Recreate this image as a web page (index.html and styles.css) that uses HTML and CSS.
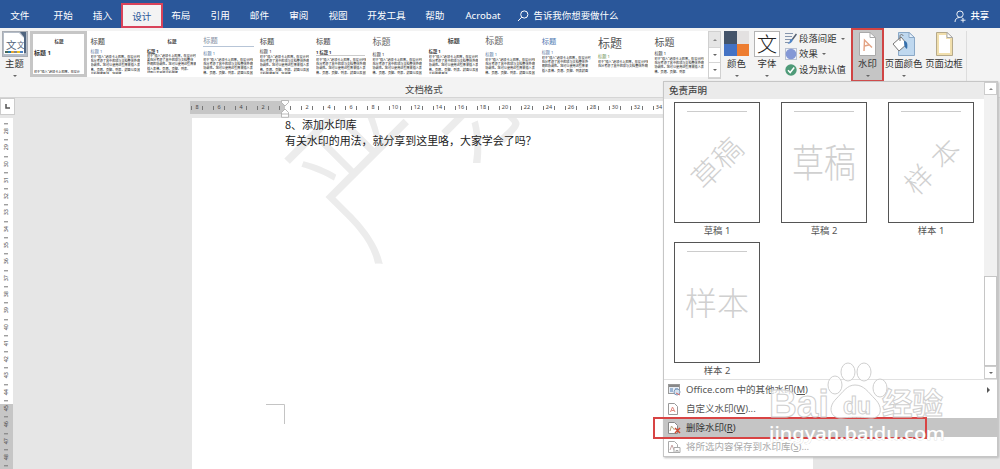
FILE: index.html
```html
<!DOCTYPE html>
<html lang="zh-CN">
<head>
<meta charset="utf-8">
<title>Word</title>
<link rel="stylesheet" href="styles.css">
</head>
<body>
<div class="app">
<header class="tabs">
<span class="tab file">文件</span><span class="tab">开始</span><span class="tab">插入</span><span class="tab active">设计</span><span class="tab">布局</span><span class="tab">引用</span><span class="tab">邮件</span><span class="tab">审阅</span><span class="tab">视图</span><span class="tab">开发工具</span><span class="tab">帮助</span><span class="tab acro">Acrobat</span>
<span class="search"><svg width="12" height="12" viewBox="0 0 12 12" fill="none" stroke="#fff" stroke-width="1"><circle cx="7.3" cy="4.5" r="3.6"/><path d="M4.7 7.2 1 11"/></svg>告诉我你想要做什么</span>
<span class="share"><svg width="12" height="13" viewBox="0 0 12 13" fill="none" stroke="#fff" stroke-width=".9"><circle cx="6" cy="4.2" r="3.2"/><path d="M1 12c0-3 2-4.5 4.5-4.5M7.5 7.3l1 .9M9 8v4.5M6.7 10.2h4.8"/></svg>共享</span>
</header>
<section class="ribbon">
<div class="theme">
<svg width="26" height="26" viewBox="0 0 26 26"><rect x=".5" y=".5" width="25" height="25" fill="#b5bdc8" stroke="#a8acb3"/><path d="M2 2h15l5 5v16H2z" fill="#fff"/><path d="M18 1h6v21h-2V6z" fill="#50657f"/><text x="4" y="18" font-size="10.500" fill="#53657c">文</text><text x="15" y="17" font-size="7.500" fill="#53657c">文</text><path d="M3 20h3v2H3z" fill="#465"/><path d="M6 20h3v2H6z" fill="#27a"/><path d="M9 20h3v2H9z" fill="#e8a72d"/><path d="M12 20h3v2h-3z" fill="#888"/><path d="M15 20h3v2h-3z" fill="#efc123"/><path d="M18 20h3v2h-3z" fill="#4b83c4"/></svg>
<span>主题</span><i class="arrow"></i>
</div>
<div class="gallery">
<div class="style chosen"><b class="t center">标题</b><b class="h">标题 1</b><p>对于"插入"选项卡上的库，在设计</p></div>
<div class="style"><span class="t">标题</span><span class="h blue">标题 1</span><p>对于"插入"选项卡上的库，在设计时都<br>充分考虑了其中的项与文档整体外观的<br>协调性。您可以使用这些库来插入表<br>格、页眉、页脚、列表、封面以及其他<br>文档构建基块。您创建</p></div>
<div class="style s3"><b class="t center">标题</b><b class="h">标题 1</b><p>对于"插入"选项卡上的库，在设计时都<br>要充分考虑了其中的项与文档整体<br>外观的协调性。您可以使用这些库来<br>插入表格、页眉、页脚、列表、<br>封面以及其他文档构建</p></div>
<div class="style s4"><span class="t">标题</span><span class="h blue">标题 1</span><p>对于"插入"选项卡上的库，在设计时都<br>充分考虑了其中的项与文档整体外观的<br>协调性。您可以使用这些库来插入表<br>格、页眉、页脚、列表、封面以及其他</p></div>
<div class="style"><span class="t">标题</span><span class="h">标题 1</span><p>对于"插入"选项卡上的库，在设计时都<br>充分考虑了其中的项与文档整体外观的<br>协调性。您可以使用这些库来插入表<br>格、页眉、页脚、列表、封面以及其他<br>文档构建基块。您创建</p></div>
<div class="style s6"><span class="t">标题</span><b class="h">1 标题 1</b><p>对于"插入"选项卡上的库，在设计时都<br>充分考虑了其中的项与文档整体外观的<br>协调性。您可以使用这些库来插入表<br>格、页眉、页脚、列表、封面以及其他</p></div>
<div class="style s7"><span class="t">标题</span><span class="h">标题 1</span><p>对于"插入"选项卡上的库，在设计时都<br>充分考虑了其中的项与文档整体外观的<br>协调性。您可以使用这些库来插入表<br>格、页眉、页脚、列表、封面以及其他</p></div>
<div class="style s8"><b class="t center">标题</b><b class="h">标题 1</b><p>对于"插入"选项卡上的库，在设计时都<br>充分考虑了其中的项与文档整体外观的<br>协调性。您可以使用这些库来插入表<br>格、页眉、页脚、列表、封面以及其他<br>文档构建基块</p></div>
<div class="style s9"><span class="t">标题</span><span class="h navy">标题 1</span><p>对于"插入"选项卡上的库，在设计时都<br>充分考虑了其中的项与文档整体外观的<br>协调性。您可以使用这些库来插入表<br>格、页眉、页脚、列表、封面以及其他</p></div>
<div class="style s10"><span class="t">标题</span><span class="h navy">标题 1</span><p>对于"插入"选项卡上的库，在设计时<br>充分考虑了其中的项与文档整体外<br>观的协调性。您可以使用这些库来<br>插入表格、页眉、页脚、列表封面</p></div>
<div class="style s11"><span class="t">标题</span><span class="h green">标题 1</span><p>对于"插入"选项卡上的库，在设计时都<br>充分考虑了其中的项与文档整体外观的</p></div>
<div class="style s12"><span class="t">标题</span><span class="h">标题 1</span><p>对于"插入"选项卡上的库，在设计时都<br>充分考虑了其中的项与文档整体外观的<br>协调性。您可以使用这些库来插入表<br>格、页眉、页脚、列表</p></div>
</div>
<div class="gscroll"><span class="off"><i class="arrow up"></i></span><span><i class="arrow"></i></span><span><i class="arrow more"></i></span></div>
<div class="big colors"><svg width="25" height="25" viewBox="0 0 25 25"><path d="M0 0h13v13H0z" fill="#44546a"/><path d="M13 0h12v13H13z" fill="#e3e1e1"/><path d="M0 13h13v12H0z" fill="#4472c4"/><path d="M13 13h12v12H13z" fill="#ed7d31"/></svg><span>颜色</span><i class="arrow"></i></div>
<div class="big fonts"><svg width="26" height="26" viewBox="0 0 26 26"><rect x=".5" y=".5" width="25" height="25" fill="#fff" stroke="#b4b4b4"/><text x="13" y="20.500" text-anchor="middle" font-size="20" font-weight="300" fill="#222">文</text></svg><span>字体</span><i class="arrow"></i></div>
<div class="opts">
<div><svg width="12" height="13" viewBox="0 0 12 13" fill="none"><path d="M0 1.500h8M0 4.500h7M0 7.500h6M0 10.500h4" stroke="#8695ac"/><path d="M11.500 2 7 8" stroke="#555f6e" stroke-width="1.500"/><path d="M7.500 7c1 2-2 5-5 5l2-2c0-2 1.500-3.500 3-3" fill="#4f83c4"/></svg><span>段落间距</span><i class="arrow"></i></div>
<div><svg width="12" height="12" viewBox="0 0 12 12"><rect x=".5" y=".5" width="11" height="11" fill="#eef1f7" stroke="#b9c1d1"/><circle cx="6" cy="6" r="5.300" fill="#8498d6"/></svg><span>效果</span><i class="arrow"></i></div>
<div><svg width="12" height="12" viewBox="0 0 12 12"><circle cx="6" cy="6" r="5.700" fill="#4e9a78"/><path d="m3 6.200 2.200 2.300L9.200 3.500" fill="none" stroke="#fff" stroke-width="1.500"/></svg><span>设为默认值</span></div>
</div>
<div class="big wm"><svg width="17" height="24" viewBox="0 0 17 24"><path d="M.5.5H11l5.500 5v18H.5z" fill="#fff" stroke="#aaa"/><path d="M11 .5v5h5.500" fill="none" stroke="#aaa"/><path d="M5 19 5.500 8 13 15.500M5.300 14l4.500-1" fill="none" stroke="#e3a384" stroke-width="1.400"/></svg><span>水印</span><i class="arrow"></i></div>
<div class="big pcolor"><svg width="23" height="24" viewBox="0 0 23 24"><path d="M6.500.5H17l5.500 5v18h-16z" fill="#bfd8ef" stroke="#8ba9c7"/><path d="M17 .5v5h5.500z" fill="#e8f1fa" stroke="#8ba9c7"/><path d="m1 12 8-7 6 7-8 7z" fill="#fff" stroke="#777"/><path d="M8 9V4c0-2 3-2 3 0" fill="none" stroke="#777"/><path d="M12 9c3 0 4 3 3 8-2-1-3-3-3-8" fill="#346fad"/></svg><span>页面颜色</span><i class="arrow"></i></div>
<div class="big pborder"><svg width="17" height="24" viewBox="0 0 17 24"><path d="M.5.5H11l5.500 5v18H.5z" fill="#f1dfad" stroke="#b5a98a"/><path d="M3 3h7v4h4v14H3z" fill="#fff"/><path d="M11 .5v5h5.500z" fill="#fff" stroke="#aaa"/></svg><span>页面边框</span></div>
<div class="grouplabel">文档格式</div>
</section>
<main class="work">
<aside class="side">
<div class="corner"><svg width="5" height="5" viewBox="0 0 5 5"><path d="M1 0v4h4" fill="none" stroke="#555" stroke-width="1.500"/></svg></div>
<div class="vruler"><span>28</span><span>29</span><span>30</span><span>31</span><span>32</span><span>33</span><span>34</span><span>35</span><span>36</span><span>37</span><span>38</span><span>39</span><span>40</span><span>41</span><span>42</span><span>43</span><span>44</span><span>45</span><span>46</span><span>47</span><span>48</span><span></span></div>
</aside>
<div class="canvas">
<div class="hruler"><span>8</span><span>6</span><span>4</span><span>2</span><span class="zero"><svg class="indent" width="8" height="18" viewBox="0 0 8 18" fill="#fff" stroke="#aaa" stroke-width=".8"><path d="M.5.5h7v2L4 6 .5 2.500zM4 9l3.500 3.500v4.800h-7v-4.800zM.5 14h7"/></svg></span><span>2</span><span>4</span><span>6</span><span>8</span><span>10</span><span>12</span><span>14</span><span>16</span><span>18</span><span>20</span><span>22</span><span>24</span><span>26</span><span>28</span><span>30</span><span>32</span><span>34</span></div>
<article class="page">
<svg class="pagemark" width="621" height="351" viewBox="0 0 621 351"><text class="bgmark" transform="translate(177 50) rotate(-45) scale(.8 1)" x="-85" y="65">严禁</text><path d="M74 286.500h18.500V306" fill="none" stroke="#c4c4c4"/></svg>
<p>8、添加水印库</p><p>有关水印的用法，就分享到这里咯，大家学会了吗？</p>
</article>
</div>
</main>
<div class="menu">
<div class="list">
<div class="listmain"><h2>免责声明</h2>
<div class="thumbs">
<figure><div class="sheet"><em class="tilt">草稿</em></div><figcaption>草稿 1</figcaption></figure>
<figure><div class="sheet"><em class="tall">草稿</em></div><figcaption>草稿 2</figcaption></figure>
<figure><div class="sheet"><em class="tilt wide">样本</em></div><figcaption>样本 1</figcaption></figure>
<figure><div class="sheet"><em>样本</em></div><figcaption>样本 2</figcaption></figure>
</div></div>
<div class="bar"><span class="btn"><i class="arrow up"></i></span><span class="thumb"></span><span class="btn"><i class="arrow"></i></span></div>
</div>
<div class="item"><svg width="13" height="12" viewBox="0 0 13 12" fill="none"><rect x=".5" y=".5" width="11" height="9" fill="#e8edf4" stroke="#999"/><path d="M1 2h10" stroke="#888" stroke-width="2"/><path d="M2 5h3M2 7h3M7 5h3" stroke="#4e7fb5"/><circle cx="9" cy="8" r="3" fill="#d5e2ef" stroke="#7f9bbb"/><path d="m8 9 4 2" stroke="#d56a6a"/></svg><span>Office.com 中的其他水印(<u>M</u>)</span><i class="sub"></i></div>
<div class="item"><svg width="10" height="12" viewBox="0 0 10 12" fill="#fff" stroke="#999"><path d="M.5.5h6l3 3v8h-9z"/><path d="m2.500 9 2-5 2.500 5M3.500 7.500h2.500" fill="none" stroke="#e08a80"/></svg><span>自定义水印(<u>W</u>)...</span></div>
<div class="item hot"><svg width="13" height="12" viewBox="0 0 13 12" fill="#fff" stroke="#888"><path d="M.5.500h6l3 3v8h-9z"/><path d="m2 9 1.500-5 3 4" fill="none" stroke="#b4a67e"/><path d="m7 6 5 5M12 6l-5 5" stroke="#cf4b32" stroke-width="1.500"/></svg><span>删除水印(<u>R</u>)</span></div>
<div class="item dim"><svg width="13" height="12" viewBox="0 0 13 12" fill="#fff" stroke="#aaa"><path d="M.5.5h6l3 3v8h-9z"/><path d="m2 9 2-5 2 5" fill="none" stroke="#c9a5a5"/><path d="M6 6.500h6v5H6zM8 9.500h2v2H8z"/></svg><span>将所选内容保存到水印库(<u>S</u>)...</span></div>
</div>
<div class="redbox"></div>
<svg class="brand" width="190" height="90" viewBox="0 0 190 90">
<g class="outline"><text x="3" y="57" font-size="38" textLength="60" lengthAdjust="spacingAndGlyphs">Bai</text>
<ellipse cx="69" cy="25" rx="7" ry="9"/><ellipse cx="82" cy="12" rx="7" ry="9"/><ellipse cx="98" cy="12" rx="7" ry="9"/><ellipse cx="114" cy="28" rx="7" ry="9"/>
<path d="M89 25c9 0 13 7 20 14 9 9 6 20-5 19-7-1-20-1-28 0-11 1-15-10-6-19 7-7 11-14 19-14z"/>
<text x="77" y="54" font-size="23" textLength="28" lengthAdjust="spacingAndGlyphs">du</text>
<text class="cn" x="116" y="54" font-size="30" textLength="61" lengthAdjust="spacingAndGlyphs">经验</text></g>
<text class="url" x="3" y="80" textLength="176" lengthAdjust="spacingAndGlyphs">jingyan.baidu.com</text>
</svg>
</div>
</body>
</html>
```

FILE: styles.css
```css
* { box-sizing: border-box; }
body { margin: 0; font: 9.4px/12px "Noto Sans", "Noto Sans CJK SC", sans-serif; color: #444; }
p, h2, figure { margin: 0; }
svg { display: block; flex: none; }
.app { position: relative; width: 1000px; height: 469px; overflow: hidden; background: #e6e6e6; display: flex; flex-direction: column; }
.tabs { height: 28px; flex: none; display: flex; align-items: center; background: #2a579a; color: #fff; padding-top: 4px; font-size: 9.6px; }
.tab { flex: none; width: 39.3px; text-align: center; white-space: nowrap; }
.tab.file { width: 43.5px; padding-right: 4px; }
.tab.active { width: 42px; height: 25px; margin: -1px -1.6px 0 -1.3px; line-height: 23px; background: #f3f3f3; color: #2a579a; border: 2px solid #d9435a; }
.tab:nth-child(10) { width: 57.5px; }
.tab.acro { width: 57px; }
.search { display: flex; align-items: center; gap: 4px; margin-left: 6px; font-size: 9.45px; }
.share { margin-left: auto; margin-right: 11px; display: flex; align-items: center; gap: 4px; font-weight: 500; font-size: 9.3px; }
.ribbon { position: relative; flex: none; height: 70px; background: #f3f3f3; border-bottom: 1px solid #d5d5d5; display: flex; align-items: flex-start; padding: 3px 0 0 1px; }
.arrow { display: block; width: 0; border: 2px solid transparent; border-top-color: #666; border-bottom: 0; }
.arrow.up { border-top: 0; border-bottom: 2px solid #888; }
.arrow.more { width: 4px; box-shadow: 0 -3px 0 -1px #888; }
.theme, .big { display: flex; flex-direction: column; align-items: center; flex: none; color: #333; white-space: nowrap; }
.theme { width: 27px; margin-right: 2px; }
.theme span { margin: 1px 0 5px; }
.gallery { display: flex; flex: none; width: 678px; height: 46px; background: #fff; overflow: hidden; }
.style { flex: none; width: 56.4px; height: 46px; overflow: hidden; padding: 4px 0 0 3.5px; display: flex; flex-direction: column; }
.t { height: 13px; line-height: 12px; font-size: 7px; color: #444; }
.style > span.t { font-size: 7.3px; }
.t.center { font-size: 4.5px; width: 50px; text-align: center; }
.h { height: 7px; font-size: 4.2px; line-height: 7px; color: #333; white-space: nowrap; }
.blue, .navy { color: #5a789f; }
.green { color: #6c9152; }
.style p { height: 19px; width: 49.5px; overflow: hidden; flex: none; font-size: 3.1px; line-height: 4.2px; color: #333; white-space: nowrap; font-weight: 500; }
.style.chosen { border: 3px solid #c6c6c6; padding: 1px; width: 57px; }
.chosen .t { font-size: 4.5px; }
.chosen .h { font-size: 6px; height: 23px; line-height: 10px; }
.chosen p { height: 3px; }
.s3 .h { height: 6px; }
.style.s4 > span.t { border-bottom: 1px solid #b7c5d7; width: 51px; height: 12px; line-height: 10px; color: #8894a7; }
.s4 .h { height: 11px; line-height: 13px; }
.s6 .h { margin: 2px 0; border-bottom: 1px solid #ccc; width: 49px; }
.s7 .t { line-height: 14px; height: 17px; }
.style.s7 > span.t, .style.s9 > span.t { font-size: 9px; color: #666; }
.s8 .t.center { font-size: 6px; }
.s9 .t { height: 16px; }
.style.s10 > span.t { color: #5279b2; height: 14px; }
.style.s11 > span.t { font-size: 12px; height: 22px; line-height: 18px; color: #555; }
.style.s12 > span.t { font-size: 10px; height: 15px; line-height: 14px; color: #555; }
.gscroll { flex: none; width: 13px; height: 48px; display: grid; grid-template-rows: 16px 15px 15px; border: 1px solid #d0d0d0; }
.gscroll span { display: grid; place-items: center; background: #fff; border-bottom: 1px solid #d5d5d5; }
.gscroll .off { background: #e5e5e5; }
.big span { margin: 2px 0 5px; }
.colors { width: 31px; }
.big.fonts { width: 30px; }
.fonts span { margin-top: 1px; }
.opts { flex: none; width: 69px; padding-left: 3px; white-space: nowrap; color: #333; font-size: 9.4px; }
.opts div { display: flex; align-items: center; height: 16px; gap: 2px; margin-top: -.3px; }
.opts .arrow { margin-left: 2px; }
.wm { width: 33px; height: 54px; margin: -3px 1px 0 0; padding-top: 2px; border: 2px solid #d04444; background: #c5c5c5; }
.pcolor svg, .pborder svg { margin-top: 1px; }
.pcolor { width: 37px; margin-right: 3px; }
.pborder { width: 42px; height: 54px; padding-right: 3px; border-right: 1px solid #ddd; }
.grouplabel { position: absolute; left: 405px; top: 56px; color: #444; }
.work { flex: 1; display: flex; min-height: 0; }
.side { width: 15px; flex: none; display: flex; flex-direction: column; }
.corner { width: 15px; height: 17px; margin-bottom: 3px; background: #fff; border: 1px solid #ccc; display: grid; place-items: center; }
.vruler { flex: 1; width: 13px; overflow: hidden; background: linear-gradient(#fff 286px, #c6c6c6 286px); padding-top: 5px; display: flex; flex-direction: column; }
.vruler span { flex: none; width: 13px; height: 16.3px; writing-mode: vertical-rl; transform: rotate(180deg); text-align: center; font-size: 5.5px; line-height: 13px; color: #444; background: linear-gradient(#777, #777) center bottom / 4px 1px no-repeat; }
.canvas { margin-left: 175px; width: 623px; display: flex; flex-direction: column; }
.hruler { flex: none; margin-top: 3px; height: 13px; display: flex; margin-bottom: 4px; background: linear-gradient(90deg, #c6c6c6 95px, #fff 95px); padding-left: 1px; }
.hruler span { flex: none; width: 22px; position: relative; left: -5px; text-align: center; font-size: 5.5px; line-height: 13px; color: #444; background: linear-gradient(#777, #777) 5px center / 1px 4px no-repeat, linear-gradient(#777, #777) 16px center / 1px 4px no-repeat; }
.indent { position: absolute; left: 7px; top: -1px; z-index: 1; }
.page { position: relative; flex: 1; margin-left: 2px; width: 621px; background: #fff; padding-left: 93px; color: #222; font-family: "Noto Sans CJK SC", sans-serif; font-size: 10.95px; line-height: 16px; overflow: hidden; }
.page p { position: relative; top: -2px; white-space: nowrap; }
.pagemark { position: absolute; left: 0; top: 0; }
.bgmark { font-family: "Noto Sans CJK SC", sans-serif; font-size: 170px; font-weight: 300; fill: #ececec; }
.menu { position: absolute; left: 663px; top: 81px; width: 335px; height: 376px; background: #fff; border: 1px solid #c6c6c6; box-shadow: 1px 1px 2px #bbb; color: #555; }
.list { display: flex; height: 298px; border-bottom: 1px solid #e1e1e1; }
.listmain { width: 320px; }
.listmain h2 { height: 17px; line-height: 17px; padding-left: 5px; background: #ebebeb; font-size: 9.5px; font-weight: 500; color: #444; }
.thumbs { display: grid; grid-template-columns: repeat(3, 107px); padding: 3px 0 0 10px; }
figure { height: 140px; width: 86px; text-align: center; }
.sheet { height: 121px; border: 1px solid #555; display: grid; place-items: center; background: linear-gradient(#ccc, #ccc) 12px 8px / 60px 1px no-repeat; }
.sheet em { font-style: normal; font-size: 32px; line-height: 36px; font-weight: 300; color: #d0d0d0; white-space: nowrap; }
.sheet .tall { transform: scaleY(1.2); }
.sheet .tilt { font-size: 29px; transform: rotate(-45deg); }
.sheet .wide { letter-spacing: 9px; margin-right: -9px; font-size: 28px; }
figcaption { line-height: 15px; }
.bar { width: 13px; margin-left: auto; background: #f1f1f1; display: flex; flex-direction: column; }
.btn { display: grid; place-items: center; height: 13px; background: #fff; border: 1px solid #ccc; }
.bar .thumb { margin-top: auto; height: 90px; background: #fff; border: 1px solid #c6c6c6; }
.item { height: 19px; display: flex; align-items: center; padding-left: 4px; font-size: 9.5px; white-space: nowrap; }
.item span { padding-left: 5px; }
.item svg[width="10"] { margin-right: 3px; }
.hot { background: #c5c5c5; color: #333; }
.dim { color: #aaa; }
.sub { margin-left: auto; margin-right: 7px; border: 3px solid transparent; border-left-color: #555; border-right: 0; }
.redbox { position: absolute; left: 653px; top: 417px; width: 274px; height: 22px; border: 2px solid #d84444; }
.brand { position: absolute; left: 766px; top: 360px; }
.outline { fill: rgba(255,255,255,.72); stroke: #cfcfcf; stroke-width: 1; font-family: "Liberation Sans", sans-serif; font-weight: 700; }
.cn { font-family: "Noto Sans CJK SC", sans-serif; }
.url { font-family: "Noto Sans", sans-serif; font-size: 18px; font-weight: 500; fill: #fff; stroke: #ccc; stroke-width: .5; paint-order: stroke; }
```
